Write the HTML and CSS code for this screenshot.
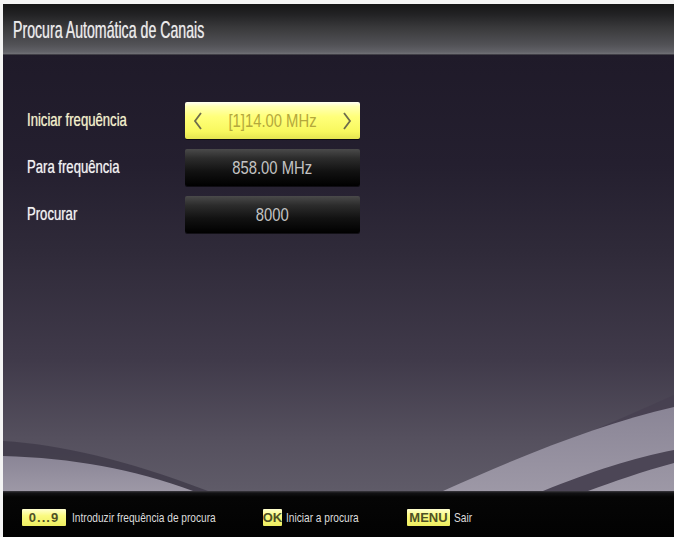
FILE: index.html
```html
<!DOCTYPE html>
<html lang="pt">
<head>
<meta charset="utf-8">
<title>Procura Automática de Canais</title>
<link rel="stylesheet" href="styles.css">
</head>
<body>
<div class="screen">
  <header class="topbar">
    <span class="title">Procura Automática de Canais</span>
  </header>
  <main class="panel">
    <svg class="waves" viewBox="0 0 671 436" preserveAspectRatio="none" aria-hidden="true">
      <defs>
        <linearGradient id="wl" x1="0" y1="0" x2="0" y2="1">
          <stop offset="0" stop-color="#8a8596"/>
          <stop offset="1" stop-color="#9d98a6"/>
        </linearGradient>
      </defs>
      <path d="M0 386 C60 390 120 404 205 436 L0 436 Z" fill="#3e3948" opacity="0.8"/>
      <path d="M0 401 C70 403 130 414 190 436 L0 436 Z" fill="url(#wl)"/>
      <path d="M450 436 C520 405 600 372 671 340 L671 436 Z" fill="#463f50" opacity="0.7"/>
      <path d="M440 436 C520 400 600 368 671 352 L671 436 Z" fill="url(#wl)"/>
      <path d="M540 436 C590 416 630 403 671 395 L671 408 C640 416 610 427 585 436 Z" fill="#4c4656"/>
    </svg>
    <div class="rows">
      <div class="label label-active">
        <span class="sq sq-label">Iniciar frequência</span>
      </div>
      <div class="field field-active">
        <svg class="chev" viewBox="0 0 10 18" aria-hidden="true"><polyline points="8,1 2,9 8,17" /></svg>
        <span class="sq sq-val">[1]14.00 MHz</span>
        <svg class="chev" viewBox="0 0 10 18" aria-hidden="true"><polyline points="2,1 8,9 2,17" /></svg>
      </div>

      <div class="label">
        <span class="sq sq-label">Para frequência</span>
      </div>
      <div class="field">
        <span class="sq sq-val">858.00 MHz</span>
      </div>

      <div class="label">
        <span class="sq sq-label">Procurar</span>
      </div>
      <div class="field">
        <span class="sq sq-val">8000</span>
      </div>
    </div>
  </main>
  <footer class="footbar">
    <div class="hint hint-1">
      <span class="key key-num">0...9</span>
      <span class="sq sq-hint">Introduzir frequência de procura</span>
    </div>
    <div class="hint hint-2">
      <span class="key key-ok">OK</span>
      <span class="sq sq-hint">Iniciar a procura</span>
    </div>
    <div class="hint hint-3">
      <span class="key key-menu">MENU</span>
      <span class="sq sq-hint">Sair</span>
    </div>
  </footer>
</div>
</body>
</html>
```
FILE: styles.css
```css
html, body {
  margin: 0;
  padding: 0;
  background: #f4f4f4;
}
body {
  width: 674px;
  height: 537px;
  overflow: hidden;
  font-family: "Liberation Sans", Arial, sans-serif;
}
.screen {
  margin: 4px 0 0 3px;
  width: 671px;
  height: 533px;
  display: flex;
  flex-direction: column;
  background: #1f1a2a;
}
.topbar {
  height: 51px;
  flex: none;
  display: flex;
  align-items: center;
  padding-left: 10px;
  background: linear-gradient(#161616 0%, #222224 20%, #38383a 45%, #525256 80%, #626268 94%, #6e6e74 97%, #2a2830 100%);
}
.title {
  display: inline-block;
  font-size: 24px;
  color: #ececec;
  white-space: nowrap;
  transform: scaleX(0.59);
  transform-origin: left center;
  text-shadow: 0 0 1px rgba(255,255,255,0.5);
}
.panel {
  flex: 1;
  position: relative;
  overflow: hidden;
  background: linear-gradient(#1f1a29 0%, #241f2f 25%, #2f2a39 45%, #403a4a 70%, #55505e 88%, #5f5b68 100%);
}
.waves {
  position: absolute;
  left: 0;
  top: 0;
  width: 100%;
  height: 100%;
}
.rows {
  position: relative;
  display: grid;
  grid-template-columns: 158px 175px;
  grid-auto-rows: 37px;
  row-gap: 10px;
  padding: 47px 0 0 24px;
}
.label {
  display: flex;
  align-items: center;
  padding-bottom: 2px;
}
.sq {
  display: inline-block;
  white-space: nowrap;
}
.sq-label {
  font-size: 19px;
  color: #f2f2f2;
  transform: scaleX(0.69);
  transform-origin: left center;
  text-shadow: 0 0 1px rgba(255,255,255,0.6);
}
.label-active .sq-label {
  color: #f4f0c4;
}
.field {
  display: flex;
  align-items: center;
  justify-content: center;
  border-radius: 2px;
  background: linear-gradient(#4a4a4a 0%, #2c2c2c 25%, #121212 60%, #000 100%);
  box-shadow: 0 1px 0 rgba(0,0,0,0.6);
}
.sq-val {
  font-size: 19px;
  color: #c4c4c4;
  transform: scaleX(0.78);
}
.field-active {
  justify-content: space-between;
  padding: 0 8px 0 8px;
  background: linear-gradient(#fffff4 0%, #ffffb4 12%, #ffff7a 40%, #f8f85e 80%, #e4e450 100%);
}
.field-active .sq-val {
  color: #b4a83c;
}
.chev {
  width: 10px;
  height: 18px;
  fill: none;
  stroke: #6e6c4c;
  stroke-width: 1.8;
}
.footbar {
  height: 46px;
  flex: none;
  display: grid;
  grid-template-columns: 241px 144px auto;
  align-items: center;
  padding: 6px 0 0 19px;
  background: linear-gradient(#3c3a40 0px, #121214 2px, #050505 6px, #020202 100%);
  box-sizing: border-box;
}
.hint {
  display: flex;
  align-items: center;
}
.key {
  display: inline-flex;
  align-items: center;
  justify-content: center;
  height: 17px;
  font-size: 13px;
  font-weight: bold;
  color: #4e5026;
  background: linear-gradient(#ffffd0 0%, #fafa80 40%, #eeee60 100%);
  border-radius: 1px;
}
.key-num { width: 44px; letter-spacing: 1px; }
.key-ok { width: 19px; }
.key-menu { width: 43px; }
.sq-hint {
  font-size: 13px;
  color: #dcdcdc;
  margin-left: 5px;
  transform: scaleX(0.78);
  transform-origin: left center;
}
.hint-1 .sq-hint { margin-left: 6px; }
.hint-2 .sq-hint { margin-left: 4px; }
.hint-3 .sq-hint { margin-left: 4px; }
```
